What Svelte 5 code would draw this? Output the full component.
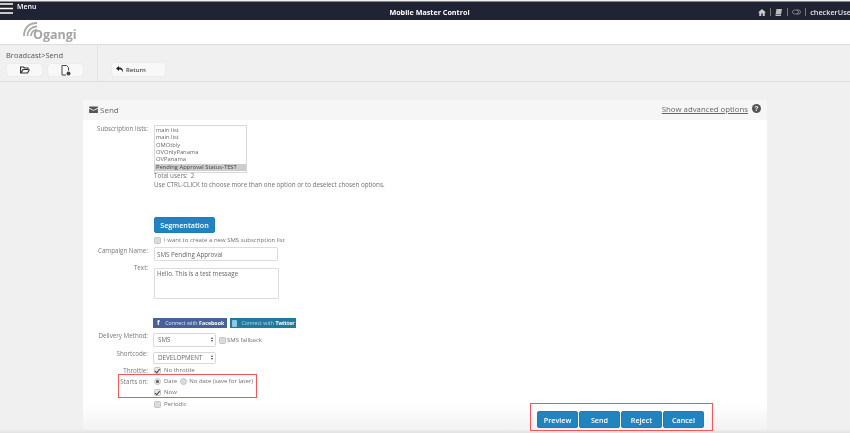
<script>
  const lists = ['main list','main list','OMOtbly','OVOnlyPanama','OVPanama','Pending Approval Status-TEST'];
</script>

<div class="page">
  <header class="topbar">
    <div class="menu">
      <svg width="13" height="11" viewBox="0 0 13 11"><path d="M0 1h13M0 5.500h13M0 10h13" stroke="#fff" stroke-width="1.600"/></svg>
      <span>Menu</span>
    </div>
    <div class="title">Mobile Master Control</div>
    <div class="tools">
      <svg width="8" height="7" viewBox="0 0 16 14"><path d="M8 0 0 7h2.500v7h4V9h3v5h4V7H16z" fill="#ccc"/></svg>
      <i></i>
      <svg width="7" height="7" viewBox="0 0 14 14"><path d="M3 0h11l-2 11H1z M1 12h11v2H1z" fill="#bbb"/></svg>
      <i></i>
      <svg width="9" height="6" viewBox="0 0 18 12"><rect x="1" y="2" width="16" height="8" rx="4" fill="none" stroke="#999" stroke-width="1.500"/><path d="M9 2a4 4 0 0 1 0 8" fill="none" stroke="#999" stroke-width="1.500"/></svg>
      <i></i>
      <span class="user">checkerUser</span>
    </div>
  </header>

  <div class="brand">
    <svg width="15" height="15" viewBox="0 0 15 15" class="waves"><path d="M14 1C6 1 1 6 1 14M14 4.500C8.500 4.500 4.500 8.500 4.500 14M14 8c-3.500 0-6 2.500-6 6" fill="none" stroke="#aaa" stroke-width="1.800"/></svg>
    <span class="logo">Ogangi</span>
  </div>

  <div class="toolbar">
    <div class="crumbs">
      <div class="crumb">Broadcast&gt;Send</div>
      <div class="crumb-btns">
        <button class="tool" aria-label="Open">
          <svg width="10" height="8" viewBox="0 0 20 16"><path d="M1 14V2h6l2 2h7v3H6L2 14h13l4-7" fill="none" stroke="#333" stroke-width="2.400"/></svg>
        </button>
        <button class="tool" aria-label="New">
          <svg width="10" height="11" viewBox="0 0 20 22"><path d="M10 20H2V1h9l4 4v6" fill="none" stroke="#444" stroke-width="2"/><circle cx="15" cy="17" r="4" fill="#444"/></svg>
        </button>
      </div>
    </div>
    <div class="actions">
      <button class="return">
        <svg width="8" height="7" viewBox="0 0 16 14"><path d="M6 0 0 5l6 5V7c4 0 7 1 8 6 1-6-2-10-8-10z" fill="#222"/></svg>
        <span>Return</span>
      </button>
    </div>
  </div>

  <section class="card">
    <div class="card-head">
      <div class="card-title">
        <svg width="9" height="7" viewBox="0 0 20 16"><path d="M0 1h20v3L10 9 0 4zM0 6l10 5 10-5v10H0z" fill="#555"/></svg>
        <span>Send</span>
      </div>
      <div class="head-right">
        <span class="advanced">Show advanced options</span>
        <span class="help">?</span>
      </div>
    </div>

    <div class="form">
      <div class="row r-lists">
        <span class="label">Subscription lists:</span>
        <div class="field">
          <div class="listbox">
            {#each lists as l, i}
              <div class="opt" class:sel={i === lists.length - 1}>{l}</div>
            {/each}
          </div>
          <div class="note total">Total users:&nbsp; 2</div>
          <div class="note hint">Use CTRL-CLICK to choose more than one option or to deselect chosen options.</div>
        </div>
      </div>

      <div class="row r-seg">
        <span class="label"></span>
        <div class="field">
          <button class="primary seg">Segmentation</button>
          <label class="check newlist"><span class="box"></span>I want to create a new SMS subscription list</label>
        </div>
      </div>

      <div class="row r-name">
        <span class="label">Campaign Name:</span>
        <div class="field"><div class="input name">SMS Pending Approval</div></div>
      </div>

      <div class="row r-text">
        <span class="label">Text:</span>
        <div class="field"><div class="input area">Hello. This is a test message</div></div>
      </div>

      <div class="row r-social">
        <span class="label"></span>
        <div class="field social">
          <span class="fb"><b class="f">f</b>Connect with <b>Facebook</b></span>
          <span class="tw"><b class="t"></b>Connect with <b>Twitter</b></span>
        </div>
      </div>

      <div class="row r-method">
        <span class="label">Delivery Method:</span>
        <div class="field inline">
          <div class="select">SMS<span class="arrows"></span></div>
          <label class="check fallback"><span class="box"></span>SMS fallback</label>
        </div>
      </div>

      <div class="row r-code">
        <span class="label">Shortcode:</span>
        <div class="field"><div class="select short">DEVELOPMENT<span class="arrows"></span></div></div>
      </div>

      <div class="row r-throttle">
        <span class="label">Throttle:</span>
        <div class="field"><label class="check"><span class="box on"></span>No throttle</label></div>
      </div>

      <div class="row r-starts">
        <span class="label">Starts on:</span>
        <div class="field inline">
          <label class="check"><span class="radio on"></span>Date</label>
          <label class="check nodate"><span class="radio"></span>No date (save for later)</label>
        </div>
      </div>

      <div class="row r-now">
        <span class="label"></span>
        <div class="field"><label class="check"><span class="box on"></span>Now</label></div>
      </div>

      <div class="row r-periodic">
        <span class="label"></span>
        <div class="field"><label class="check"><span class="box"></span>Periodic</label></div>
      </div>
    </div>

    <div class="footer">
      <button class="primary act">Preview</button>
      <button class="primary act">Send</button>
      <button class="primary act">Reject</button>
      <button class="primary act">Cancel</button>
    </div>
  </section>

  <div class="mark mark-starts"></div>
  <div class="mark mark-actions"></div>
</div>

<style>
  :global(body) { margin: 0; background: #f0f0f0; }
  .page {
    position: relative;
    width: 850px;
    height: 433px;
    overflow: hidden;
    background: linear-gradient(#f0f0f0 429px, #e2e2e2 433px);
    font-family: "Open Sans", "Liberation Sans", sans-serif;
    color: #666;
    filter: blur(0.35px);
  }
  .topbar {
    margin-top: 1px;
    border-top: 1px solid #8a8a8a;
    height: 18px;
    background: #1f2333;
    color: #fff;
    display: grid;
    grid-template-columns: 1fr auto 1fr;
    align-items: center;
    font-size: 7.500px;
    font-weight: 600;
  }
  .menu { display: flex; align-items: center; gap: 4px; padding-bottom: 8px; font-size: 7px; }
  .menu svg { margin-top: 1px; }
  .menu span { margin-top: -3px; }
  .title { font-size: 7.200px; font-weight: 700; padding-left: 9px; }
  .tools { display: flex; justify-content: flex-start; align-items: center; gap: 4.200px; white-space: nowrap; width: 92px; justify-self: end; }
  .tools i { width: 1px; height: 8px; background: #777; flex: none; }
  .tools svg { flex: none; }
  .user { flex: none; font-size: 7.300px; color: #e4e4e4; }
  .brand {
    height: 24px;
    background: #fff;
    border-bottom: 1px solid #dcdcdc;
    display: flex;
    align-items: flex-end;
    position: relative;
  }
  .waves { position: absolute; left: 23px; top: 2px; }
  .logo {
    margin-left: 33px;
    font-family: "Open Sans", sans-serif;
    font-weight: 700;
    font-size: 12.500px;
    line-height: 18px;
    color: #a4a4a4;
  }
  .toolbar {
    height: 36px;
    border-bottom: 1px solid #dedede;
    display: flex;
  }
  .crumbs { width: 97px; border-right: 1px solid #e2e2e2; box-sizing: content-box; }
  .crumb { font-size: 7.500px; line-height: 10px; padding: 5px 0 0 6px; color: #555; }
  .crumb-btns { display: flex; gap: 6px; padding: 4px 0 0 7px; }
  .tool {
    width: 35px; height: 12px; padding: 0;
    border: 0; border-radius: 2px;
    background: #f8f8f8;
    box-shadow: 0 0 1px #ccc;
    display: flex; align-items: center; justify-content: center;
  }
  .actions { padding: 18px 0 0 14px; }
  .return {
    width: 53px; height: 13px; padding: 0 0 0 4px;
    border: 0; border-radius: 2px;
    background: #f8f8f8;
    box-shadow: 0 0 1px #ccc;
    display: flex; align-items: center; gap: 2px;
    font: 600 6px "Open Sans", sans-serif;
    color: #444;
  }
  .card {
    position: absolute;
    left: 83px; top: 100px;
    width: 684px; height: 330px;
    background: linear-gradient(#fff 92%, #f2f2f2 100%);
  }
  .card-head {
    height: 20px;
    background: #f6f6f6;
    display: flex;
    justify-content: space-between;
    align-items: center;
    padding: 0 6px 2px 6px;
    box-sizing: border-box;
  }
  .card-title { display: flex; align-items: center; gap: 2px; font-size: 8px; color: #666; }
  .head-right { display: flex; align-items: center; gap: 4px; }
  .advanced { font-size: 7.800px; text-decoration: underline; color: #666; }
  .help {
    width: 9px; height: 9px; border-radius: 50%;
    background: #555; color: #fff;
    font: 700 7px/9px "Liberation Sans", sans-serif;
    text-align: center;
    margin-bottom: 2px;
  }
  .form { font-size: 6.250px; color: #707070; }
  .row { display: grid; grid-template-columns: 65px 1fr; column-gap: 6px; align-items: start; }
  .label { text-align: right; line-height: 9px; color: #777; }
  .field { min-width: 0; }
  .inline { display: flex; align-items: center; }
  .r-lists { margin-top: 5px; }
  .r-lists .label { margin-top: -1px; }
  .listbox {
    width: 91px; height: 46px;
    background: #fff;
    border: 1px solid #d8d8d8;
    overflow: hidden;
    font-size: 5.800px;
  }
  .opt { height: 7.400px; line-height: 7.400px; padding-left: 1px; white-space: nowrap; color: #666; }
  .opt:first-child { margin-top: 0.800px; }
  .opt.sel { background: #cdcdcd; color: #444; font-weight: 500; }
  .note { line-height: 9px; }
  .total { margin-top: -2px; }
  .hint { white-space: nowrap; }
  .primary {
    border: 1px solid #1d7eb6;
    border-radius: 2px;
    background: #2284bf;
    color: #fff;
    font-family: "Open Sans", sans-serif;
    font-weight: 600;
    padding: 0;
  }
  .r-seg { margin-top: 28px; }
  .seg { display: block; width: 61px; height: 16px; font-size: 7.200px; }
  .check { display: flex; align-items: center; gap: 3px; line-height: 9px; white-space: nowrap; font-size: 6px; }
  .newlist { margin-top: 3px; height: 9px; }
  .box, .radio {
    flex: none;
    width: 5px; height: 5px;
    background: #dcdcdc;
    border: 0.5px solid #c4c4c4;
    border-radius: 1.500px;
    position: relative;
  }
  .radio { border-radius: 50%; }
  .box.on { background: #e8e8e8; }
  .box.on::after {
    content: "";
    position: absolute;
    left: 1px; top: 0;
    width: 2px; height: 3.500px;
    border: solid #444;
    border-width: 0 1px 1px 0;
    transform: rotate(40deg);
  }
  .radio.on { background: #e8e8e8; }
  .radio.on::after {
    content: "";
    position: absolute;
    left: 1px; top: 1px;
    width: 3px; height: 3px;
    border-radius: 50%;
    background: #555;
  }
  .input {
    box-sizing: border-box;
    background: #fff;
    border: 1px solid #dcdcdc;
    border-radius: 1px;
    color: #666;
    line-height: 9px;
    padding: 2px;
  }
  .r-name { margin-top: 2px; }
  .r-name .label { margin-top: -1px; }
  .name { width: 124px; height: 14px; }
  .r-text { margin-top: 7px; }
  .r-text .label { margin-top: -5px; }
  .area { width: 125px; height: 31px; padding-top: 0; }
  .r-social { margin-top: 19px; }
  .social { display: flex; gap: 3px; margin-left: -1px; }
  .fb, .tw {
    height: 10px;
    font-size: 5.300px;
    line-height: 10px;
    color: #dfe6f3;
    white-space: nowrap;
    display: flex;
    gap: 1.500px;
    box-sizing: border-box;
    overflow: hidden;
  }
  .fb { width: 74px; background: #48619b; padding-left: 4px; }
  .tw { width: 66px; background: #1f7a9e; padding-left: 2px; color: #b9dbe8; }
  .fb b, .tw b { font-weight: 700; color: #fff; }
  .fb .f { font: 700 8px/10px "Liberation Sans", sans-serif; margin-right: 4px; }
  .tw .t { width: 5px; height: 7px; margin: 1.500px 3px 0 0; background: #8cc9e3; border-radius: 1px; }
  .r-method { margin-top: 5px; }
  .r-method .label { margin-top: -2px; }
  .select {
    box-sizing: border-box;
    width: 63px; height: 14px;
    margin-left: -1px;
    border: 1px solid #d8d8d8;
    border-radius: 2px;
    background: #fff;
    color: #666;
    line-height: 12px;
    padding-left: 4px;
    position: relative;
  }
  .select.short { height: 12px; line-height: 10px; }
  .arrows { position: absolute; right: 2px; top: 3px; }
  .short .arrows { top: 2px; }
  .arrows::before, .arrows::after {
    content: "";
    display: block;
    width: 0; height: 0;
    border-left: 1.500px solid transparent;
    border-right: 1.500px solid transparent;
  }
  .arrows::before { border-bottom: 2px solid #444; margin-bottom: 1px; }
  .arrows::after { border-top: 2px solid #444; }
  .fallback { margin-left: 3px; gap: 1px; }
  .r-code { margin-top: 5px; }
  .r-code .label { margin-top: -3px; }
  .r-throttle { margin-top: 1.500px; }
  .r-starts { margin-top: 2px; }
  .nodate { margin-left: 3px; gap: 2px; }
  .r-now { margin-top: 2px; }
  .r-periodic { margin-top: 3px; }
  .footer {
    position: absolute;
    left: 454px; top: 311px;
    display: flex;
    gap: 1px;
  }
  .act { width: 41px; height: 17px; font-size: 7.200px; }
  .mark { position: absolute; border: 1.500px solid #f4565a; box-sizing: border-box; }
  .mark-starts { left: 118px; top: 374px; width: 139px; height: 24px; }
  .mark-actions { left: 530px; top: 403px; width: 183px; height: 28px; }
</style>
